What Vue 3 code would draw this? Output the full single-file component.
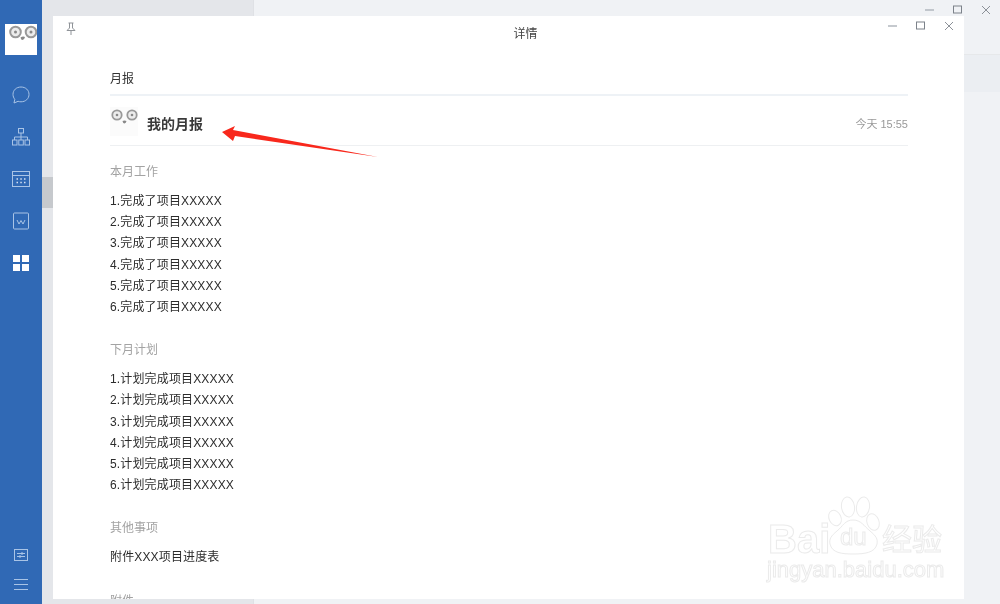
<script setup>
const plans = [
  { title: '本月工作', items: [1, 2, 3, 4, 5, 6].map((n) => `${n}.完成了项目XXXXX`) },
  { title: '下月计划', items: [1, 2, 3, 4, 5, 6].map((n) => `${n}.计划完成项目XXXXX`) },
  { title: '其他事项', items: ['附件XXX项目进度表'] },
]
</script>

<template>
  <div class="app">
    <aside class="sidebar">
      <div class="logo">
        <svg width="32" height="31" viewBox="0 0 32 31">
          <circle cx="10.500" cy="8" r="5.300" fill="#ececec" stroke="#999" stroke-width="2" />
          <circle cx="10.500" cy="8" r="1.500" fill="#888" />
          <circle cx="26" cy="8" r="5.300" fill="#ececec" stroke="#999" stroke-width="2" />
          <circle cx="26" cy="8" r="1.500" fill="#888" />
          <path d="M15.500 13.500q2.500-1.500 4.500-.5q-.5 2.500-2.500 3q-1.500 0-2-2.500z" fill="#888" />
        </svg>
      </div>
      <nav class="nav">
        <span class="nav-item">
          <svg width="20" height="20" viewBox="0 0 20 20" fill="none" stroke="#a9c4e6" stroke-width="1">
            <path d="M10 2c4.700 0 8 3.200 8 7.400s-3.300 7.400-8 7.400c-1 0-2-.2-2.900-.5L3 18l.8-3.700C2.700 13 2 11.300 2 9.400 2 5.200 5.300 2 10 2z" />
          </svg>
        </span>
        <span class="nav-item">
          <svg width="20" height="20" viewBox="0 0 20 20" fill="none" stroke="#a9c4e6" stroke-width="1">
            <rect x="7.500" y="1.500" width="5" height="4.500" />
            <path d="M10 6v4M3.500 13v-3h13v3M10 10v3" />
            <rect x="1.500" y="13" width="4.500" height="5" />
            <rect x="7.800" y="13" width="4.500" height="5" />
            <rect x="14" y="13" width="4.500" height="5" />
          </svg>
        </span>
        <span class="nav-item">
          <svg width="20" height="20" viewBox="0 0 20 20" fill="none" stroke="#a9c4e6" stroke-width="1">
            <rect x="1.500" y="2.500" width="17" height="15" />
            <path d="M1.500 6.500h17" />
            <path d="M5.500 10h1.500M9.300 10h1.500M13 10h1.500M5.500 13.500h1.500M9.300 13.500h1.500M13 13.500h1.500" stroke="#d5e2f3" stroke-width="1.500" />
          </svg>
        </span>
        <span class="nav-item">
          <svg width="20" height="20" viewBox="0 0 20 20" fill="none" stroke="#a9c4e6" stroke-width="1">
            <rect x="2.500" y="2" width="15" height="16" rx="1" />
            <path d="M6 9l2 4 2-3.500 2 3.500 2-4" />
          </svg>
        </span>
        <span class="nav-item">
          <svg width="18" height="18" viewBox="0 0 18 18" fill="#fff">
            <rect x="1" y="1" width="7" height="7" />
            <rect x="10" y="1" width="7" height="7" />
            <rect x="1" y="10" width="7" height="7" />
            <rect x="10" y="10" width="7" height="7" />
          </svg>
        </span>
      </nav>
      <div class="side-bottom">
        <svg width="16" height="14" viewBox="0 0 16 14" fill="none" stroke="#a9c4e6" stroke-width="1">
          <rect x="1.500" y="1.500" width="13" height="11" />
          <path d="M4 5.500h8M4 8.500h8" />
          <path d="M9 4v3M7 7v3" />
        </svg>
        <svg width="16" height="14" viewBox="0 0 16 14" fill="none" stroke="#a9c4e6" stroke-width="1">
          <path d="M1 2.500h14M1 7.500h14M1 12.500h14" />
        </svg>
      </div>
    </aside>

    <div class="rail"><span class="thumb"></span></div>
    <div class="list-col"></div>
    <div class="right-col">
      <div class="top-bar">
        <div class="controls outer">
          <svg width="10" height="10" viewBox="0 0 10 10"><path d="M0 5h9" stroke="#b2b7be" stroke-width="1.500" /></svg>
          <svg width="10" height="10" viewBox="0 0 10 10"><rect x=".5" y="1" width="8" height="7" fill="none" stroke="#7c828a" stroke-width="1" /></svg>
          <svg width="10" height="10" viewBox="0 0 10 10"><path d="M1 1l8 8M9 1l-8 8" stroke="#8c9198" stroke-width="1" /></svg>
        </div>
      </div>
      <div class="band"></div>
    </div>

    <section class="dialog">
      <header class="dialog-head">
        <svg class="pin" width="12" height="14" viewBox="0 0 12 14" fill="none" stroke="#8f9398" stroke-width="1">
          <path d="M3.500 1h5M4.500 1v5L2 8.500h8L7.500 6V1M6 8.500V13" />
        </svg>
        <span class="dialog-title">详情</span>
        <div class="controls inner">
          <svg width="10" height="10" viewBox="0 0 10 10"><path d="M0 5h9" stroke="#b2b7be" stroke-width="1.500" /></svg>
          <svg width="10" height="10" viewBox="0 0 10 10"><rect x=".5" y="1" width="8" height="7" fill="none" stroke="#7c828a" stroke-width="1" /></svg>
          <svg width="10" height="10" viewBox="0 0 10 10"><path d="M1 1l8 8M9 1l-8 8" stroke="#8c9198" stroke-width="1" /></svg>
        </div>
      </header>
      <div class="dialog-body">
        <div class="crumb">月报</div>
        <div class="author-row">
          <svg class="avatar" width="28" height="29" viewBox="0 0 28 29">
            <rect width="28" height="29" fill="#fbfbfb" />
            <circle cx="7" cy="8" r="4.700" fill="#ececec" stroke="#999" stroke-width="1.800" />
            <circle cx="7" cy="8" r="1.300" fill="#888" />
            <circle cx="22" cy="8" r="4.700" fill="#ececec" stroke="#999" stroke-width="1.800" />
            <circle cx="22" cy="8" r="1.300" fill="#888" />
            <path d="M12.500 14q2-1 4 0q-.5 2-2 2.500q-1.500 0-2-2.500z" fill="#888" />
          </svg>
          <strong class="author-title">我的月报</strong>
          <span class="time">今天 15:55</span>
        </div>
        <div v-for="plan in plans" :key="plan.title" class="block">
          <h3 class="block-title">{{ plan.title }}</h3>
          <p v-for="item in plan.items" :key="item" class="line">{{ item }}</p>
        </div>
        <h3 class="block-title">附件</h3>
      </div>
    </section>

    <svg class="arrow" width="170" height="40" viewBox="0 0 170 40">
      <polygon points="12,14 25,8 23,12 168,39 25,18 23,23" fill="#f8281c" />
    </svg>

    <svg class="watermark" width="190" height="92" viewBox="0 0 190 92">
      <g fill="#fff" stroke="#ebebeb" stroke-width="1">
        <ellipse cx="71" cy="23" rx="6" ry="8" transform="rotate(-25 71 23)" />
        <ellipse cx="84" cy="12" rx="6.500" ry="10" transform="rotate(-8 84 12)" />
        <ellipse cx="99" cy="12" rx="6.500" ry="10" transform="rotate(8 99 12)" />
        <ellipse cx="109" cy="27" rx="6" ry="8.500" transform="rotate(-20 109 27)" />
        <path d="M89 25c8 0 11 6 17 11 6 5 8 8 7 13-2 9-13 10-24 10s-21-1-23-10c-1-5 1-8 7-13 6-5 8-11 16-11z" />
        <text x="4" y="58" class="wm-big">Bai</text>
        <text x="76" y="50" class="wm-du">du</text>
        <text x="118" y="55" class="wm-cjk">经验</text>
        <text x="3" y="82" class="wm-url">jingyan.baidu.com</text>
      </g>
    </svg>
  </div>
</template>

<style>
html,
body {
  margin: 0;
  overflow: hidden;
}
</style>

<style scoped>
.app {
  position: relative;
  display: flex;
  width: 1000px;
  height: 604px;
  overflow: hidden;
  background: #f0f2f5;
  font-family: "Liberation Sans", "Noto Sans CJK SC", sans-serif;
  font-size: 12px;
  color: #333;
  filter: blur(0.3px);
}
.sidebar {
  display: flex;
  flex-direction: column;
  align-items: center;
  flex: 0 0 42px;
  background: #3069b5;
}
.logo {
  display: flex;
  margin-top: 24px;
  width: 32px;
  height: 31px;
  background: #fff;
}
.nav {
  display: flex;
  flex-direction: column;
  margin-top: 19px;
}
.nav-item {
  display: flex;
  align-items: center;
  justify-content: center;
  width: 42px;
  height: 42px;
}
.side-bottom {
  display: flex;
  flex-direction: column;
  align-items: center;
  gap: 15px;
  margin-top: auto;
  margin-bottom: 13px;
}
.rail {
  flex: 0 0 11px;
  padding-top: 177px;
  box-sizing: border-box;
  background: #e4e6ea;
}
.thumb {
  display: block;
  height: 31px;
  background: #c6c9cd;
}
.list-col {
  flex: 0 0 200px;
  background: #e4e6ea;
  border-right: 1px solid #dfe1e5;
}
.right-col {
  flex: 1;
}
.top-bar {
  height: 54px;
  border-bottom: 1px solid #e6e8ea;
}
.band {
  height: 37px;
  background: #ebeef2;
}
.controls {
  display: flex;
  align-items: center;
  gap: 18px;
}
.outer {
  justify-content: flex-end;
  padding: 5px 9px 0 0;
}
.dialog {
  position: absolute;
  left: 53px;
  top: 16px;
  display: flex;
  flex-direction: column;
  width: 911px;
  height: 583px;
  overflow: hidden;
  background: #fff;
}
.dialog-head {
  position: relative;
  flex: none;
  display: flex;
  justify-content: center;
  padding: 10px 0 0 34px;
  height: 31px;
  box-sizing: border-box;
}
.dialog-title {
  line-height: 17px;
  color: #444;
}
.pin {
  position: absolute;
  left: 12px;
  top: 6px;
}
.inner {
  position: absolute;
  right: 10px;
  top: 5px;
}
.dialog-body {
  flex: none;
  padding: 24px 56px 0 57px;
}
.crumb {
  line-height: 17px;
  padding-bottom: 6px;
  border-bottom: 2px solid #eef2f6;
  color: #333;
}
.author-row {
  display: flex;
  align-items: flex-start;
  box-sizing: border-box;
  height: 50px;
  padding-top: 11px;
  border-bottom: 1px solid #eef0f2;
}
.avatar {
  flex: none;
  margin-right: 9px;
}
.author-title {
  margin-top: 7px;
  font-size: 14px;
  line-height: 20px;
  color: #3a3a3a;
}
.time {
  margin: 7px 0 0 auto;
  font-size: 11px;
  line-height: 20px;
  color: #999;
}
.block {
  margin-bottom: 24px;
}
.block-title {
  margin: 18px 0 10px;
  font-size: 12px;
  font-weight: 400;
  line-height: 17px;
  color: #a3a3a3;
}
.block + .block .block-title {
  margin-top: 0;
}
.line {
  margin: 0;
  line-height: 21.2px;
  letter-spacing: 0.15px;
  color: #2c2c2c;
}
.arrow {
  position: absolute;
  left: 210px;
  top: 118px;
}
.watermark {
  position: absolute;
  left: 764px;
  top: 495px;
}
.wm-big {
  font-size: 40px;
  font-weight: 700;
  font-family: "Liberation Sans", sans-serif;
}
.wm-du {
  font-size: 24px;
  font-family: "Liberation Sans", sans-serif;
}
.wm-cjk {
  font-size: 30px;
  font-family: "Noto Sans CJK SC", sans-serif;
}
.wm-url {
  font-size: 22px;
  font-family: "Liberation Sans", sans-serif;
}
</style>
